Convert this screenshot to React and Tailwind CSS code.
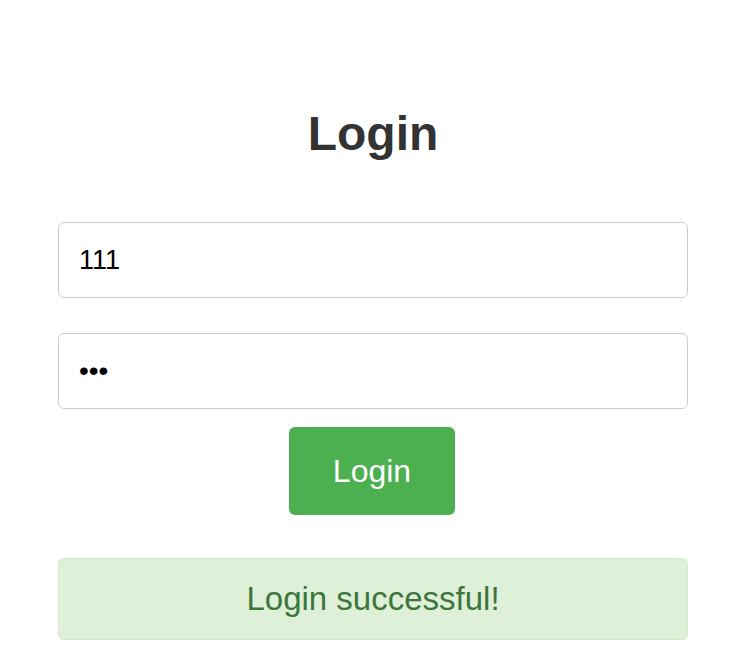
import { useState } from "react";

export default function App() {
  const [username, setUsername] = useState("111");
  const [password, setPassword] = useState("111");

  return (
    <div
      className="min-h-[654px] w-[754px] bg-white"
      style={{ fontFamily: '"Liberation Sans", Arial, sans-serif' }}
    >
      <div className="ml-[58px] flex w-[630px] flex-col pt-[106px]">
        {/* Heading */}
        <h2 className="text-center text-[48px] font-bold leading-[56px] text-[#333333]">
          Login
        </h2>

        {/* Form */}
        <input
          type="text"
          value={username}
          onChange={(e) => setUsername(e.target.value)}
          className="mt-[60px] h-[76px] w-full rounded-[6px] border border-[#cccccc] px-[20px] text-[27px] text-black outline-none"
        />
        <input
          type="password"
          value={password}
          onChange={(e) => setPassword(e.target.value)}
          className="mt-[35px] h-[76px] w-full rounded-[6px] border border-[#cccccc] px-[20px] text-[28px] text-black outline-none"
        />
        <div className="mt-[18px] flex justify-center">
          <button className="ml-[-2px] h-[88px] w-[166px] rounded-[6px] bg-[#4caf50] text-[32px] text-white">
            Login
          </button>
        </div>

        {/* Status */}
        <div className="mt-[43px] flex h-[82px] items-center justify-center rounded-[6px] border border-[#d6e9c6] bg-[#dff0d8] text-[33px] text-[#3c763d]">
          Login successful!
        </div>
      </div>
    </div>
  );
}
